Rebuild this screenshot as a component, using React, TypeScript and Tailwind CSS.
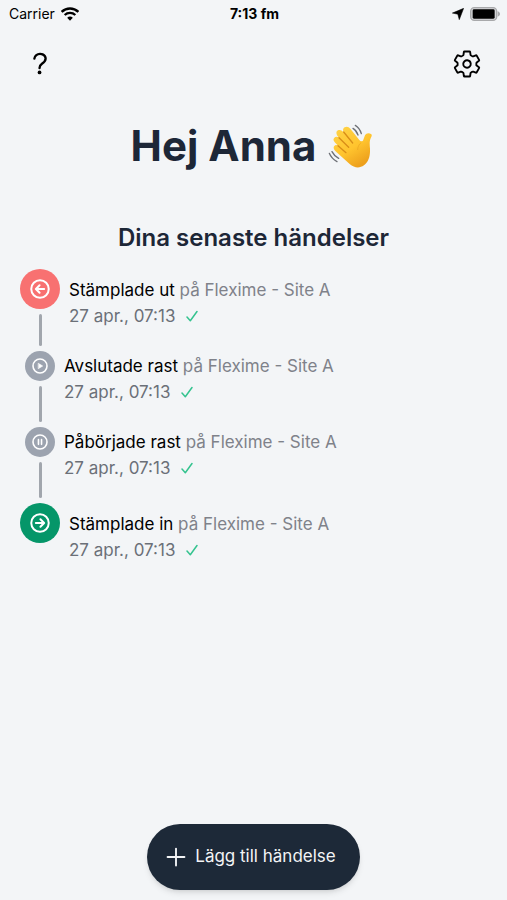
import type { ReactNode } from "react";
import { IoAdd, IoHelp, IoSettingsOutline } from "react-icons/io5";

type Event = {
  label: string;
  place: string;
  time: string;
  color: string;
  large: boolean;
  icon: ReactNode;
};

function CircleIcon({ size, children }: { size: number; children: ReactNode }) {
  return (
    <svg
      width={size}
      height={size}
      viewBox="0 0 24 24"
      fill="none"
      stroke="currentColor"
      strokeWidth="2.4"
      strokeLinecap="round"
      strokeLinejoin="round"
      aria-hidden="true"
    >
      <circle cx="12" cy="12" r="10.500" />
      {children}
    </svg>
  );
}

const events: Event[] = [
  {
    label: "Stämplade ut",
    place: "på Flexime - Site A",
    time: "27 apr., 07:13",
    color: "bg-[#f87171]",
    large: true,
    icon: (
      <CircleIcon size={20}>
        <path d="M11.500 7.500L7 12l4.500 4.500M7.500 12H17" />
      </CircleIcon>
    ),
  },
  {
    label: "Avslutade rast",
    place: "på Flexime - Site A",
    time: "27 apr., 07:13",
    color: "bg-[#9ca3af]",
    large: false,
    icon: (
      <CircleIcon size={16}>
        <path d="M9.800 8.200L16 12l-6.200 3.800z" fill="currentColor" strokeWidth="1" />
      </CircleIcon>
    ),
  },
  {
    label: "Påbörjade rast",
    place: "på Flexime - Site A",
    time: "27 apr., 07:13",
    color: "bg-[#9ca3af]",
    large: false,
    icon: (
      <CircleIcon size={16}>
        <path d="M9.700 8.500v7M14.300 8.500v7" />
      </CircleIcon>
    ),
  },
  {
    label: "Stämplade in",
    place: "på Flexime - Site A",
    time: "27 apr., 07:13",
    color: "bg-[#059669]",
    large: true,
    icon: (
      <CircleIcon size={20}>
        <path d="M12.500 7.500L17 12l-4.500 4.500M16.500 12H7" />
      </CircleIcon>
    ),
  },
];

function WifiIcon() {
  return (
    <svg width="18" height="14" viewBox="0 0 54 42" fill="none" stroke="#000" strokeWidth="7" aria-hidden="true">
      <path d="M2 14.500C16 1 38 1 52 14.500" />
      <path d="M11 24C20 15.500 34 15.500 43 24" />
      <path d="M18.500 32.500C24 27.500 30 27.500 35.500 32.500L27 41Z" fill="#000" stroke="none" />
    </svg>
  );
}

function BatteryIcon() {
  return (
    <svg width="30" height="14" viewBox="0 0 90 42" aria-hidden="true">
      <rect x="2" y="2" width="78" height="38" rx="11" fill="#d4d5d7" stroke="#a8a9ab" strokeWidth="4" />
      <rect x="8" y="7" width="66" height="28" rx="4" fill="#000" />
      <path d="M83 13c5 2 7 5 7 8s-2 6-7 8z" fill="#a8a9ab" />
    </svg>
  );
}

function StatusBar() {
  return (
    <div className="grid grid-cols-3 items-center pt-[6px] pr-[7px] pl-[9px] text-sm leading-4 text-black">
      <div className="flex items-center gap-[6px]">
        <span>Carrier</span>
        <WifiIcon />
      </div>
      <span className="text-center font-bold">7:13 fm</span>
      <div className="flex items-center justify-end gap-[6px]">
        <svg width="12" height="12" viewBox="0 0 33 33" aria-hidden="true">
          <path d="M32 1L20 32L16 17L1 14Z" stroke="#000" strokeWidth="1.500" strokeLinejoin="round" />
        </svg>
        <BatteryIcon />
      </div>
    </div>
  );
}

function WavingHand() {
  return (
    <svg className="size-11" viewBox="22 24 132 132" role="img" aria-label="👋">
      <defs>
        <linearGradient id="skin" x1="0" y1="0" x2="0.600" y2="1">
          <stop offset="0" stopColor="#ffd54a" />
          <stop offset="0.600" stopColor="#ffc42e" />
          <stop offset="1" stopColor="#eda01c" />
        </linearGradient>
      </defs>
      <path
        d="M72 34C78 30 84 32 89 38L116 72C120 77 126 77 128 71L133 58C137 50 146 50 152 55C155 58 152 62 150 67C146 76 147 87 148 98C149 120 144 137 130 148C116 158 101 156 87 144L47 108C41 102 36 96 41 90C44 86 49 87 53 90L45 82C39 76 36 70 41 65C45 61 51 62 56 66L50 59C46 53 46 46 52 43C58 40 63 43 68 48L70 50C66 44 66 38 72 34Z"
        fill="url(#skin)"
      />
      <g fill="none" stroke="#d98e18" strokeWidth="4" strokeLinecap="round">
        <path d="M69 48L96 81" />
        <path d="M55 65L84 94" />
        <path d="M52 89L76 110" />
        <path d="M121 80C115 85 111 92 111 101" strokeWidth="2" opacity="0.500" />
      </g>
      <g fill="none" stroke="#6d7076" strokeWidth="4" strokeLinecap="round">
        <path d="M104 28C112 33 119 42 122 53" />
        <path d="M97 37C104 41 109 48 112 57" />
        <path d="M34 107C38 115 44 122 54 127" />
        <path d="M26 112C30 122 38 131 49 137" />
      </g>
    </svg>
  );
}

function CheckIcon() {
  return (
    <svg
      className="text-[#34c38f]"
      width="12"
      height="12"
      viewBox="0 0 12 12"
      fill="none"
      stroke="currentColor"
      strokeWidth="1.500"
      strokeLinecap="round"
      strokeLinejoin="round"
      aria-hidden="true"
    >
      <path d="M1 7L4.300 10.800L11 1.500" />
    </svg>
  );
}

function EventRow({ event, last }: { event: Event; last: boolean }) {
  return (
    <li className={event.large ? "flex gap-[9px] pl-5" : "flex gap-[9px] pl-[25px]"}>
      <div className="flex flex-col items-center">
        <div
          className={`${event.color} ${event.large ? "size-10" : "size-[30px]"} flex items-center justify-center rounded-full text-white`}
        >
          {event.icon}
        </div>
        {!last && <div className="my-[5px] w-[3px] flex-1 rounded-full bg-[#a1a6ad]" />}
      </div>
      <div className={event.large ? "pt-2 pb-[22px]" : "pt-[2px] pb-[22px]"}>
        <p className="text-[17px] leading-[26px] text-[#7f828a]">
          <span className="text-black">{event.label}</span> {event.place}
        </p>
        <p className="flex items-center gap-[11px] text-[17px] leading-[26px] text-[#6b7078]">
          {event.time}
          <CheckIcon />
        </p>
      </div>
    </li>
  );
}

export default function App() {
  return (
    <div className="flex min-h-screen flex-col bg-[#f3f5f7] font-['Inter',sans-serif]">
      <StatusBar />

      <header className="flex items-center justify-between px-6 pt-[26px]">
        <button type="button" aria-label="Hjälp" className="flex size-8 items-center justify-center text-black">
          <IoHelp size={30} />
        </button>
        <button type="button" aria-label="Inställningar" className="flex size-8 items-center justify-center text-black">
          <IoSettingsOutline size={30} />
        </button>
      </header>

      <main className="flex-1">
        <h1 className="mt-10 flex items-center justify-center gap-3 pr-1 text-[42px] leading-[52px] font-bold text-[#1d2737]">
          Hej Anna <WavingHand />
        </h1>
        <h2 className="mt-[50px] text-center text-2xl font-semibold text-[#1d2737]">Dina senaste händelser</h2>
        <ul className="mt-[15px]">
          {events.map((event, i) => (
            <EventRow key={event.label} event={event} last={i === events.length - 1} />
          ))}
        </ul>
      </main>

      <footer className="flex justify-center pb-[10px]">
        <button
          type="button"
          className="flex h-[66px] items-center gap-1 rounded-full bg-[#1d2938] pr-6 pl-[14px] text-[17px] text-gray-100 shadow-md"
        >
          <IoAdd size={30} />
          Lägg till händelse
        </button>
      </footer>
    </div>
  );
}
